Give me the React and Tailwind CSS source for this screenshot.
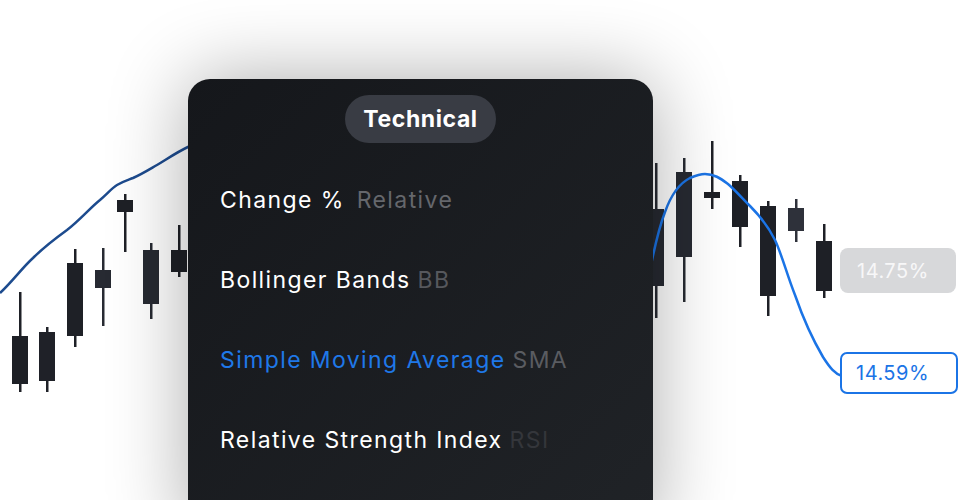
import React from 'react';

// candles: [x center, bodyTop, bodyBottom, wickTop, wickBottom, colour]
const candles = [
  [20, 336, 384, 292, 392, '#1e2026'],
  [47, 332, 381, 327, 392, '#1f2128'],
  [75, 263, 336, 249, 347, '#1e2026'],
  [103, 270, 288, 248, 326, '#272a32'],
  [125, 200, 212, 194, 252, '#1e2026'],
  [151, 250, 304, 243, 319, '#272a32'],
  [179, 250, 272, 225, 277, '#1e2026'],
  [656, 209, 286, 163, 318, '#272a32'],
  [684, 172, 257, 158, 302, '#272a32'],
  [712, 192, 198, 141, 209, '#1e2026'],
  [740, 181, 227, 175, 247, '#1e2026'],
  [768, 206, 296, 201, 316, '#1e2026'],
  [796, 208, 231, 199, 242, '#2e313a'],
  [824, 241, 291, 224, 298, '#1e2026'],
];

const items = [
  { name: 'Change %', tag: 'Relative', tagColor: 'text-[#65676c]', gap: 'ml-[12px]' },
  { name: 'Bollinger Bands', tag: 'BB', tagColor: 'text-[#56585d]', gap: 'ml-[7px]' },
  { name: 'Simple Moving Average', tag: 'SMA', tagColor: 'text-[#5a5c61]', gap: 'ml-[7px]', active: true },
  { name: 'Relative Strength Index', tag: 'RSI', tagColor: 'text-[#34363b]', gap: 'ml-[7px]' },
];

const Chart = () => (
  <svg className="absolute inset-0" width="960" height="500" viewBox="0 0 960 500">
    <path
      d="M0 293 C 12 282, 22 268, 33 258 C 45 246, 56 238, 67 230 C 80 220, 90 208, 100 200 C 108 193, 112 188, 117 185 C 124 181, 128 180, 133 178 C 142 174, 150 169, 157 165 C 167 159, 177 152, 190 146"
      fill="none"
      stroke="#1d4b8e"
      strokeWidth="2.5"
    />
    {candles.map(([x, bt, bb, wt, wb, c], i) => (
      <g key={i} fill={c}>
        <rect x={x - 1} y={wt} width="2.5" height={wb - wt} />
        <rect x={x - 8} y={bt} width="16" height={Math.max(bb - bt, 5)} />
      </g>
    ))}
    <path
      d="M650 270 C 655 245, 660 225, 665 212 C 670 198, 678 184, 690 178 C 697 175, 702 174, 705 174 C 714 174, 720 178, 728 184 C 735 190, 742 198, 750 206 C 760 216, 768 226, 775 240 C 782 255, 787 275, 795 295 C 803 318, 813 340, 823 357 C 830 368, 835 374, 842 376"
      fill="none"
      stroke="#1b74e6"
      strokeWidth="2.5"
    />
  </svg>
);

export default function App() {
  return (
    <div className="relative w-[960px] h-[500px] overflow-hidden bg-white" style={{ fontFamily: '"Inter", "Open Sans", sans-serif' }}>
      <Chart />

      <div className="absolute left-[840px] top-[248px] w-[116px] h-[45px] rounded-[8px] bg-[#d7d8da] flex items-center pl-[17px] text-[20px] tracking-[0.5px] text-[#f7f7f8]">
        14.75%
      </div>
      <div className="absolute left-[840px] top-[352px] w-[118px] h-[42px] rounded-[7px] border-[2.5px] border-[#1b74e6] bg-white flex items-center pl-[14px] text-[20px] tracking-[0.5px] text-[#1b74e6]">
        14.59%
      </div>

      <div className="relative pl-[188px] pt-[79px]">
        <div className="w-[465px] h-[460px] rounded-[22px] bg-gradient-to-br from-[#15171b] to-[#202327] shadow-[0_0_80px_rgba(0,0,0,0.33)] flex flex-col">
          <div className="flex justify-center pt-[16px]">
            <div className="h-[48px] w-[151px] justify-center rounded-full bg-[#393c44] flex items-center text-[23px] tracking-[0.6px] font-bold text-white">
              Technical
            </div>
          </div>
          <div className="mt-[17px] flex flex-col pl-[32px]">
            {items.map((it) => (
              <div key={it.name} className="h-[80px] flex items-center text-[23px] tracking-[1.4px] whitespace-nowrap">
                <span className={it.active ? 'text-[#1f78e8]' : 'text-white'}>{it.name}</span>
                <span className={`${it.gap} ${it.tagColor}`}>{it.tag}</span>
              </div>
            ))}
          </div>
        </div>
      </div>
    </div>
  );
}
